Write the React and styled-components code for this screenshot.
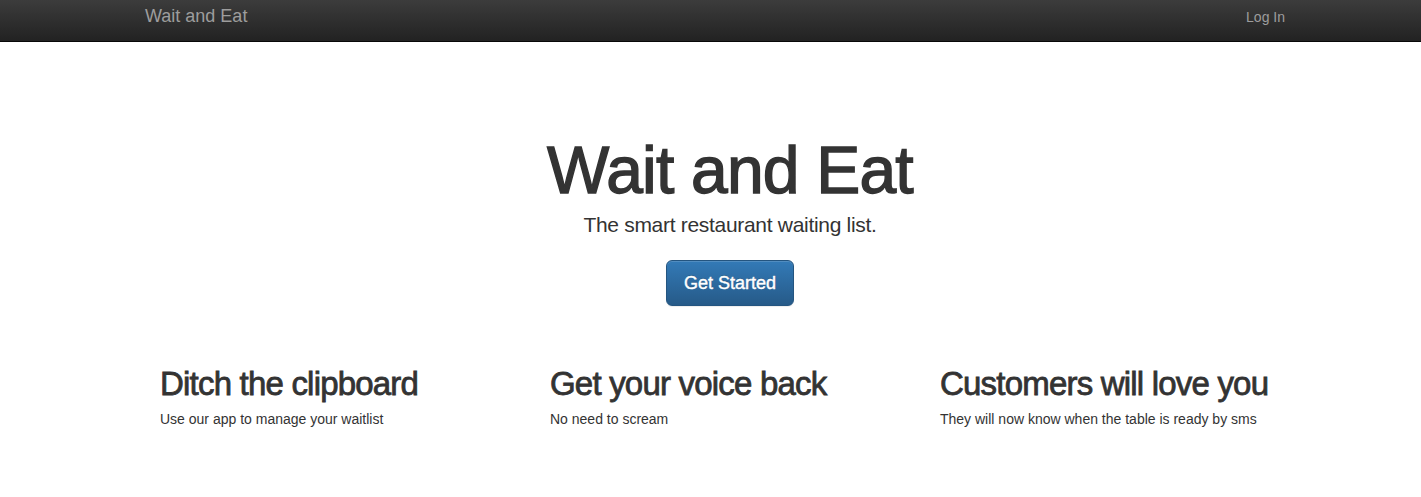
import React from "react"
import styled, { createGlobalStyle } from "styled-components"

const GlobalStyle = createGlobalStyle`
  html, body {
    margin: 0;
    padding: 0;
    background: #fff;
  }
  body {
    font-family: "Liberation Sans", Arial, sans-serif;
    font-size: 14px;
    line-height: 20px;
    color: #333;
  }
`

const Navbar = styled.nav`
  height: 41px;
  background: linear-gradient(to bottom, #3c3c3c 0, #222 100%);
  border-bottom: 1px solid #080808;
`

const Container = styled.div`
  width: 1170px;
  margin-left: calc(50% - 565.5px);
`

const NavInner = styled(Container)`
  display: flex;
  justify-content: space-between;
  align-items: flex-start;
  padding-top: 7px;
`

const Brand = styled.a`
  font-size: 18px;
  line-height: 20px;
  color: #9d9d9d;
  text-decoration: none;
  margin-top: -1px;
`

const NavLink = styled.a`
  font-size: 14px;
  line-height: 20px;
  color: #9d9d9d;
  text-decoration: none;
  margin-right: 30px;
`

const Jumbotron = styled.div`
  display: flex;
  flex-direction: column;
  align-items: center;
  padding-top: 92px;
`

const Title = styled.h1`
  margin: 0;
  font-size: 66px;
  line-height: 72px;
  font-weight: 400;
  letter-spacing: -0.8px;
  color: #333;
  -webkit-text-stroke: 1.4px #333;
`

const Lead = styled.p`
  margin: 4px 0 0;
  font-size: 21px;
  line-height: 29px;
  font-weight: 400;
  letter-spacing: -0.3px;
  color: #333;
`

const Button = styled.a`
  margin-top: 21px;
  padding: 10px 17px;
  font-size: 18px;
  line-height: 24px;
  color: #fff;
  text-decoration: none;
  border: 1px solid #245580;
  border-radius: 6px;
  background: linear-gradient(to bottom, #337ab7 0, #265a88 100%);
  box-shadow: inset 0 1px 0 rgba(255, 255, 255, 0.15), 0 1px 1px rgba(0, 0, 0, 0.075);
  text-shadow: 0 -1px 0 rgba(0, 0, 0, 0.2);
  -webkit-text-stroke: 0.4px #fff;
`

const Row = styled(Container)`
  display: grid;
  grid-template-columns: repeat(3, 390px);
  margin-top: 59px;
`

const Feature = styled.div`
  padding: 0 15px;
`

const FeatureTitle = styled.h2`
  margin: 0;
  font-size: 33px;
  line-height: 37px;
  font-weight: 400;
  letter-spacing: -0.8px;
  color: #333;
  white-space: nowrap;
  -webkit-text-stroke: 0.8px #333;
`

const FeatureText = styled.p`
  margin: 7px 0 0;
  font-size: 14px;
  line-height: 20px;
`

const features = [
  { title: "Ditch the clipboard", text: "Use our app to manage your waitlist" },
  { title: "Get your voice back", text: "No need to scream" },
  { title: "Customers will love you", text: "They will now know when the table is ready by sms" },
]

export default function App() {
  return (
    <>
      <GlobalStyle />
      <Navbar>
        <NavInner>
          <Brand href="#">Wait and Eat</Brand>
          <NavLink href="#">Log In</NavLink>
        </NavInner>
      </Navbar>
      <Container>
        <Jumbotron>
          <Title>Wait and Eat</Title>
          <Lead>The smart restaurant waiting list.</Lead>
          <Button href="#">Get Started</Button>
        </Jumbotron>
      </Container>
      <Row>
        {features.map((f) => (
          <Feature key={f.title}>
            <FeatureTitle>{f.title}</FeatureTitle>
            <FeatureText>{f.text}</FeatureText>
          </Feature>
        ))}
      </Row>
    </>
  )
}
